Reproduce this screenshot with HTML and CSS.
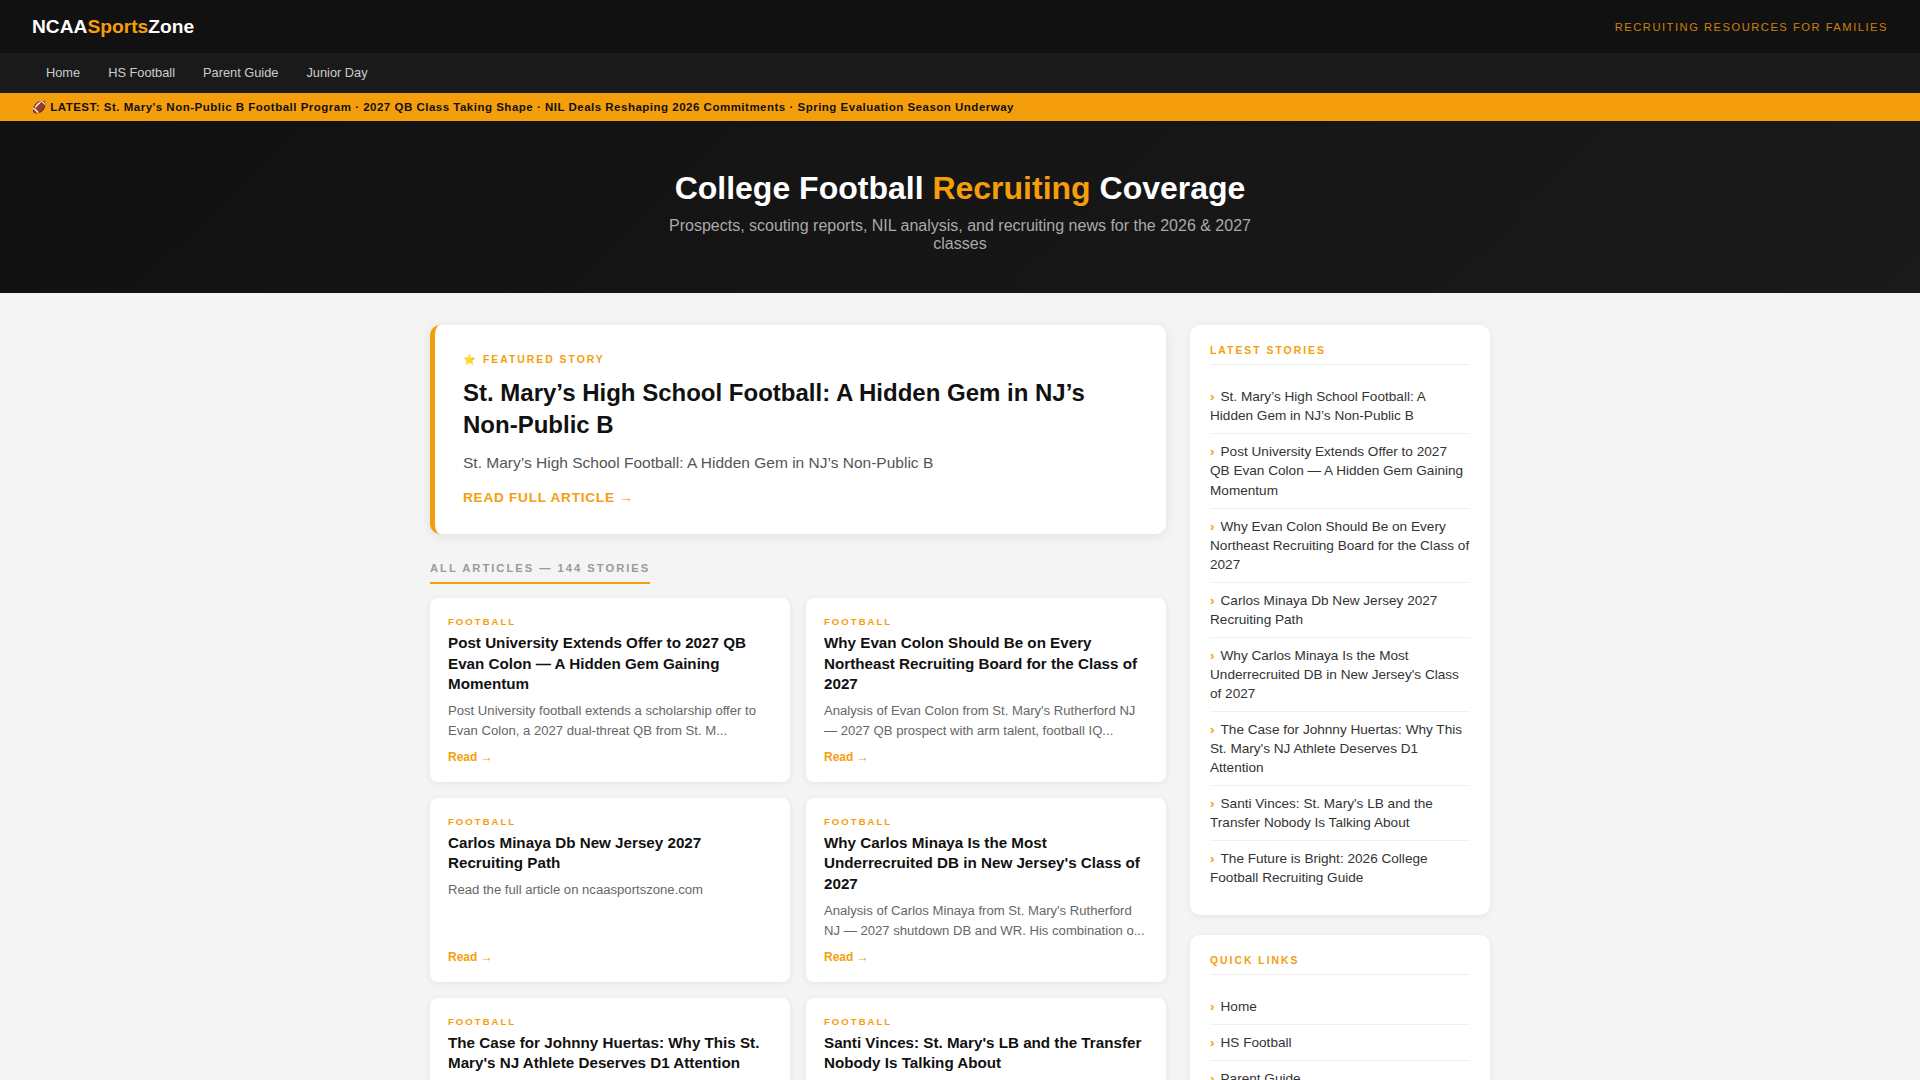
FILE: index.html
```html
<!DOCTYPE html>
<html lang="en">
<head>
<meta charset="utf-8">
<title>NCAASportsZone</title>
<link rel="stylesheet" href="styles.css">
</head>
<body>
<header class="topbar">
  <a class="logo" href="#">NCAA<span class="accent">Sports</span>Zone</a>
  <span class="tagline">Recruiting Resources for Families</span>
</header>
<nav class="nav">
  <a href="#">Home</a>
  <a href="#">HS Football</a>
  <a href="#">Parent Guide</a>
  <a href="#">Junior Day</a>
</nav>
<div class="ticker">🏈 LATEST: St. Mary's Non-Public B Football Program · 2027 QB Class Taking Shape · NIL Deals Reshaping 2026 Commitments · Spring Evaluation Season Underway</div>
<section class="hero">
  <h1>College Football <span class="accent">Recruiting</span> Coverage</h1>
  <p>Prospects, scouting reports, NIL analysis, and recruiting news for the 2026 &amp; 2027 classes</p>
</section>
<div class="layout">
  <main class="content">
    <article class="featured">
      <div class="featured-label">⭐ Featured Story</div>
      <h2>St. Mary’s High School Football: A Hidden Gem in NJ’s Non-Public B</h2>
      <p>St. Mary’s High School Football: A Hidden Gem in NJ’s Non-Public B</p>
      <a class="featured-link" href="#">Read Full Article →</a>
    </article>
    <div class="section-head"><span>All Articles — 144 Stories</span></div>
    <div class="grid">
      <article class="card">
        <div class="cat">Football</div>
        <h3>Post University Extends Offer to 2027 QB Evan Colon — A Hidden Gem Gaining Momentum</h3>
        <p>Post University football extends a scholarship offer to Evan Colon, a 2027 dual-threat QB from St. M...</p>
        <a class="read" href="#">Read →</a>
      </article>
      <article class="card">
        <div class="cat">Football</div>
        <h3>Why Evan Colon Should Be on Every Northeast Recruiting Board for the Class of 2027</h3>
        <p>Analysis of Evan Colon from St. Mary's Rutherford NJ — 2027 QB prospect with arm talent, football IQ...</p>
        <a class="read" href="#">Read →</a>
      </article>
      <article class="card">
        <div class="cat">Football</div>
        <h3>Carlos Minaya Db New Jersey 2027 Recruiting Path</h3>
        <p>Read the full article on ncaasportszone.com</p>
        <a class="read" href="#">Read →</a>
      </article>
      <article class="card">
        <div class="cat">Football</div>
        <h3>Why Carlos Minaya Is the Most Underrecruited DB in New Jersey's Class of 2027</h3>
        <p>Analysis of Carlos Minaya from St. Mary's Rutherford NJ — 2027 shutdown DB and WR. His combination o...</p>
        <a class="read" href="#">Read →</a>
      </article>
      <article class="card">
        <div class="cat">Football</div>
        <h3>The Case for Johnny Huertas: Why This St. Mary's NJ Athlete Deserves D1 Attention</h3>
        <p>Read the full article on ncaasportszone.com</p>
        <a class="read" href="#">Read →</a>
      </article>
      <article class="card">
        <div class="cat">Football</div>
        <h3>Santi Vinces: St. Mary's LB and the Transfer Nobody Is Talking About</h3>
        <p>Read the full article on ncaasportszone.com</p>
        <a class="read" href="#">Read →</a>
      </article>
    </div>
  </main>
  <aside class="sidebar">
    <section class="widget">
      <h4>Latest Stories</h4>
      <ul>
        <li><a href="#">St. Mary’s High School Football: A Hidden Gem in NJ’s Non-Public B</a></li>
        <li><a href="#">Post University Extends Offer to 2027 QB Evan Colon — A Hidden Gem Gaining Momentum</a></li>
        <li><a href="#">Why Evan Colon Should Be on Every Northeast Recruiting Board for the Class of 2027</a></li>
        <li><a href="#">Carlos Minaya Db New Jersey 2027 Recruiting Path</a></li>
        <li><a href="#">Why Carlos Minaya Is the Most Underrecruited DB in New Jersey's Class of 2027</a></li>
        <li><a href="#">The Case for Johnny Huertas: Why This St. Mary's NJ Athlete Deserves D1 Attention</a></li>
        <li><a href="#">Santi Vinces: St. Mary's LB and the Transfer Nobody Is Talking About</a></li>
        <li><a href="#">The Future is Bright: 2026 College Football Recruiting Guide</a></li>
      </ul>
    </section>
    <section class="widget">
      <h4>Quick Links</h4>
      <ul>
        <li><a href="#">Home</a></li>
        <li><a href="#">HS Football</a></li>
        <li><a href="#">Parent Guide</a></li>
        <li><a href="#">Junior Day</a></li>
      </ul>
    </section>
  </aside>
</div>
</body>
</html>
```
FILE: styles.css
```css
* { box-sizing: border-box; }
html, body { margin: 0; padding: 0; }
body {
  font-family: "Liberation Sans", Arial, sans-serif;
  background: #f4f4f4;
  color: #222;
}
a { color: inherit; text-decoration: none; }
.accent { color: #f59e0b; }

.topbar {
  display: flex;
  justify-content: space-between;
  align-items: center;
  height: 53px;
  padding: 0 32px;
  background: #111;
}
.logo { font-size: 19.2px; font-weight: 700; color: #fff; }
.tagline {
  font-size: 11.2px;
  letter-spacing: 1.5px;
  text-transform: uppercase;
  color: #f59e0b;
  opacity: 0.8;
}

.nav {
  display: flex;
  padding: 12px 32px 13px;
  background: #1a1a1a;
}
.nav a { padding: 0 14px; font-size: 12.8px; line-height: 15px; color: #ccc; }

.ticker {
  padding: 7px 32px;
  line-height: 14px;
  background: #f59e0b;
  color: #111;
  font-size: 11.5px;
  font-weight: 700;
  letter-spacing: 0.5px;
  white-space: nowrap;
}

.hero {
  padding: 48px 32px 40px;
  text-align: center;
  background: linear-gradient(135deg, #111, #1a1a1a);
}
.hero h1 { margin: 0 0 10px; font-size: 32px; line-height: 1.2; font-weight: 700; color: #fff; }
.hero p { margin: 0 auto; max-width: 600px; font-size: 16px; color: #aaa; }

.layout {
  display: grid;
  grid-template-columns: 736px 300px;
  gap: 24px;
  width: 1060px;
  margin: 0 auto;
  padding: 32px 0;
  align-items: start;
}

.featured {
  padding: 28px;
  background: #fff;
  border-left: 5px solid #f59e0b;
  border-radius: 10px;
  box-shadow: 0 2px 12px rgba(0,0,0,0.08);
}
.featured-label {
  margin-bottom: 11px;
  font-size: 10.4px;
  font-weight: 700;
  letter-spacing: 2px;
  text-transform: uppercase;
  color: #f59e0b;
}
.featured h2 { margin: 0 0 11px; font-size: 24px; line-height: 1.3; font-weight: 700; color: #111; }
.featured p { margin: 0 0 14px; font-size: 15.52px; line-height: 1.5; color: #555; }
.featured-link {
  font-size: 13.6px;
  font-weight: 700;
  letter-spacing: 0.75px;
  text-transform: uppercase;
  color: #f59e0b;
}

.section-head { margin: 24px 0 14px; }
.section-head span {
  display: inline-block;
  padding-bottom: 8px;
  border-bottom: 2px solid #f59e0b;
  font-size: 11.2px;
  font-weight: 700;
  letter-spacing: 2px;
  text-transform: uppercase;
  color: #999;
}

.grid { display: grid; grid-template-columns: 1fr 1fr; gap: 16px; }
.card {
  display: flex;
  flex-direction: column;
  padding: 18px;
  background: #fff;
  border-radius: 8px;
  box-shadow: 0 1px 6px rgba(0,0,0,0.07);
}
.cat {
  margin-bottom: 6px;
  font-size: 9.6px;
  font-weight: 700;
  letter-spacing: 2px;
  text-transform: uppercase;
  color: #f59e0b;
}
.card h3 { margin: 0 0 6px; font-size: 15.2px; line-height: 1.35; font-weight: 700; color: #111; }
.card p { margin: 0 0 8.7px; flex: 1; font-size: 13.12px; line-height: 1.55; color: #666; }
.read { font-size: 12px; font-weight: 700; color: #f59e0b; }

.sidebar { display: flex; flex-direction: column; gap: 20px; }
.widget {
  padding: 20px;
  background: #fff;
  border-radius: 10px;
  box-shadow: 0 1px 6px rgba(0,0,0,0.07);
}
.widget h4 {
  margin: 0 0 14px;
  padding-bottom: 8px;
  border-bottom: 1px solid #eee;
  font-size: 10.4px;
  font-weight: 700;
  letter-spacing: 2px;
  text-transform: uppercase;
  color: #f59e0b;
}
.widget ul { margin: 0; padding: 0; list-style: none; }
.widget li {
  padding: 8px 0;
  border-bottom: 1px solid #f0f0f0;
  font-size: 13.6px;
  line-height: 1.4;
  color: #333;
}
.widget li:last-child { border-bottom: 0; }
.widget li::before { content: "›"; margin-right: 6px; font-weight: 700; color: #f59e0b; }
```
